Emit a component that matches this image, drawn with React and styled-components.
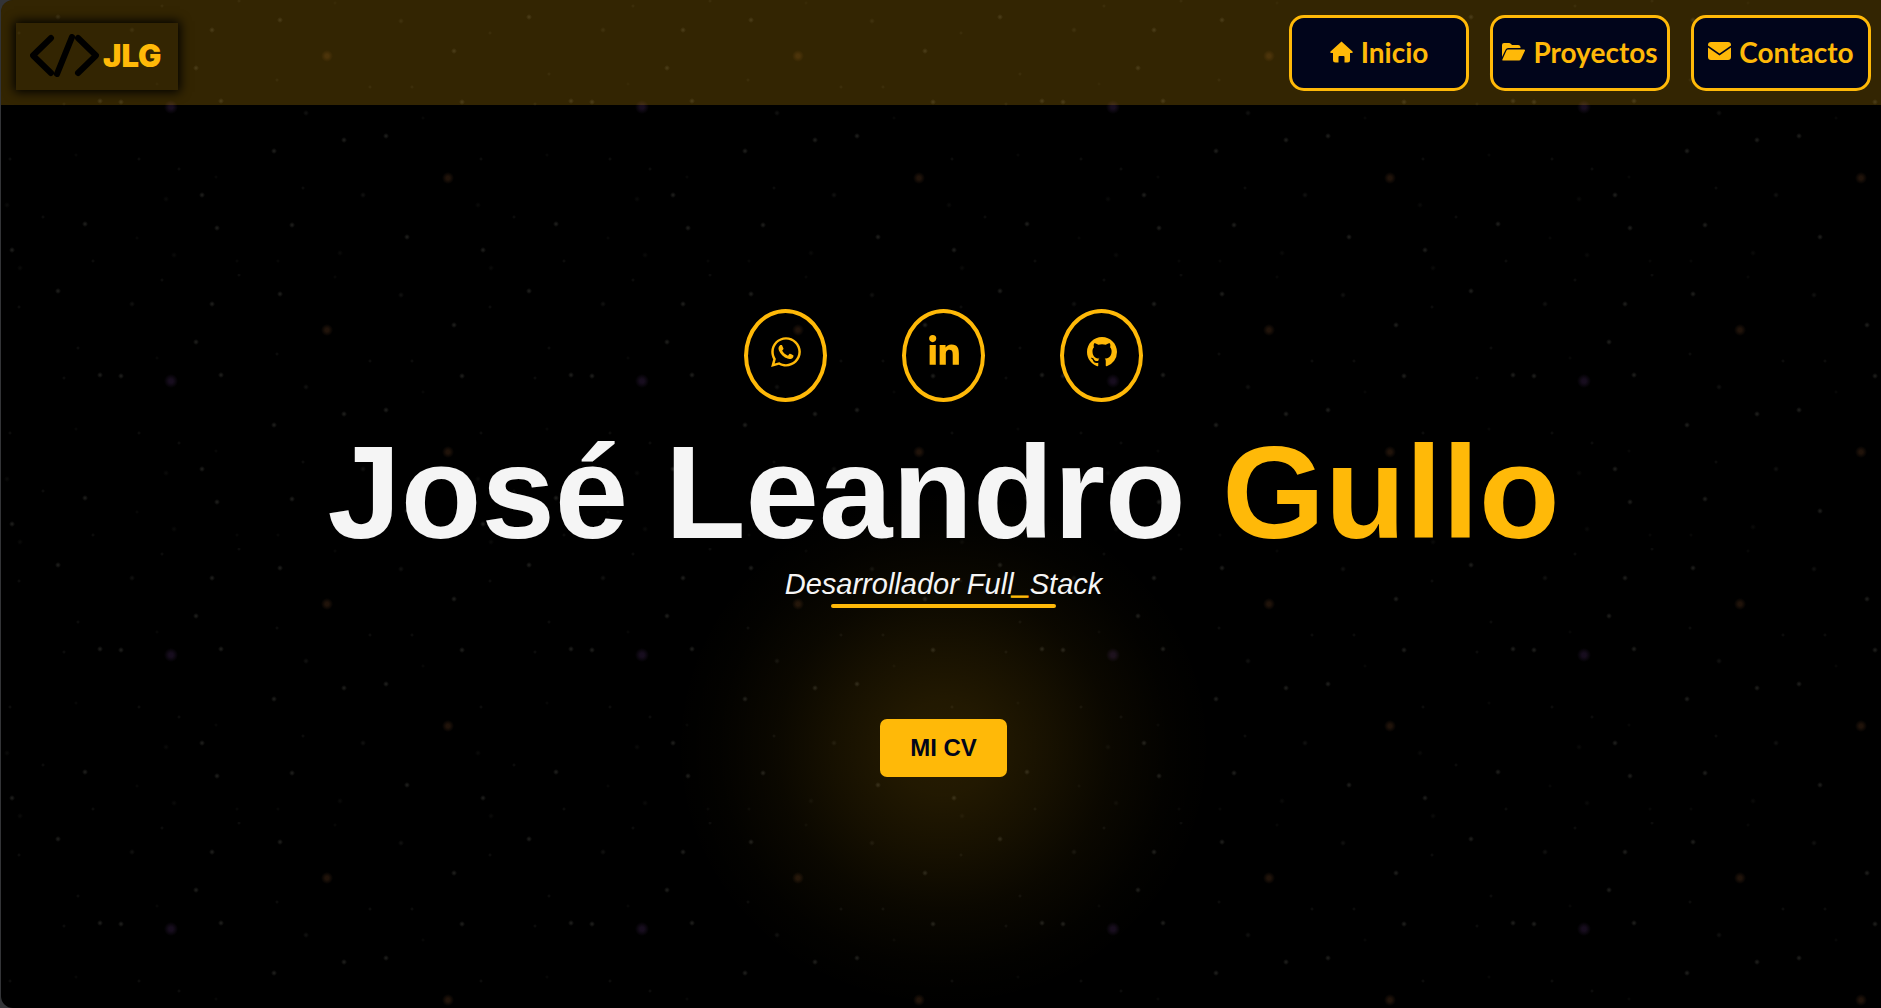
import React from "react";
import styled, { createGlobalStyle } from "styled-components";
import { FaWhatsapp, FaLinkedinIn } from "react-icons/fa6";
import { BsGithub } from "react-icons/bs";

const gold = "#ffb908";
const ink = "#01051b";

// One tile of the star field: [x, y, radius, colour]
const dim = "#090908";
const mid = "#0f0f0e";
const lit = "#1b1b19";
const amber = "#20130a";
const violet = "#170d1e";

const stars = [
  [170, 107, 6, violet], [447, 178, 5, amber], [326, 330, 5, amber],
  [305, 113, 2, mid], [422, 118, 1, dim],
  [343, 140, 2, lit], [385, 136, 2, lit], [273, 151, 2, lit],
  [9, 159, 1, mid], [75, 155, 1, dim], [138, 159, 1, mid],
  [178, 169, 1, mid], [215, 177, 1, dim], [302, 188, 1, mid],
  [201, 195, 2, lit], [165, 199, 2, dim], [362, 195, 2, mid],
  [6, 205, 2, dim], [42, 217, 1, mid], [84, 224, 2, lit],
  [216, 228, 2, lit], [291, 225, 2, lit], [136, 238, 1, dim],
  [406, 237, 2, lit], [11, 250, 2, lit], [339, 253, 2, dim],
  [173, 255, 2, dim], [19, 268, 2, dim], [92, 261, 1, mid],
  [236, 261, 1, dim], [277, 261, 1, dim], [238, 275, 1, mid],
  [161, 280, 1, mid], [334, 277, 1, dim], [57, 291, 2, lit],
  [279, 294, 2, lit], [211, 304, 2, lit], [131, 304, 2, mid],
  [400, 295, 2, mid], [18, 307, 1, mid], [453, 325, 2, lit],
  [195, 342, 2, lit], [77, 348, 1, mid], [276, 354, 1, mid],
  [156, 358, 1, dim], [369, 361, 1, mid], [411, 361, 1, mid],
  [99, 375, 2, lit], [120, 376, 2, lit], [220, 375, 2, lit],
  [461, 376, 2, lit], [63, 378, 1, mid],
];

const TILE_W = 471;
const TILE_H = 274;

const starLayers = stars
  .map(
    ([x, y, r, c]) =>
      `radial-gradient(circle at ${x}px ${y % TILE_H}px, ${c} 0, ${c} ${r / 3}px, transparent ${r + 1}px)`
  )
  .join(",");

const GlobalStyle = createGlobalStyle`
  *, *::before, *::after { box-sizing: border-box; }
  html { background: #333437; }
  body { margin: 0; }
  a { color: inherit; text-decoration: none; }
`;

const Page = styled.div`
  display: flex;
  flex-direction: column;
  min-height: 100vh;
  margin-left: 1px;
  overflow: hidden;
  isolation: isolate;
  border-radius: 12px 0 0 12px;
  color: #f5f5f5;
  font-family: "Liberation Sans", Arial, sans-serif;
  background-color: #000;
  background-image: ${starLayers};
  background-size: ${TILE_W}px ${TILE_H}px;
`;

const Header = styled.header`
  display: flex;
  align-items: center;
  justify-content: space-between;
  padding: 15px 10px 14px 15px;
  background: rgba(255, 185, 8, 0.2);
`;

const Logo = styled.a`
  display: flex;
  align-items: center;
  gap: 4px;
  height: 67px;
  margin-top: 7px;
  padding: 0 16px 2px 14px;
  box-shadow: 0 0 10px 2px #000;
  color: ${gold};
  font: 900 31px/32px Inter, "Liberation Sans", sans-serif;
`;

const LogoMark = styled.svg`
  width: 69px;
  height: 43px;
  fill: none;
  stroke: #000;
  stroke-width: 6;
  stroke-linecap: round;
  stroke-linejoin: round;
`;

const Nav = styled.nav`
  display: flex;
  gap: 21px;
`;

const NavLink = styled.a`
  display: flex;
  align-items: center;
  justify-content: center;
  gap: 8px;
  width: 180px;
  height: 76px;
  padding-bottom: 2px;
  border: 3px solid ${gold};
  border-radius: 15px;
  background: ${ink};
  color: ${gold};
  font: 700 28px/32px "Trebuchet MS", Lato, sans-serif;
`;

const NavGlyph = styled.svg`
  width: 23px;
  height: 24px;
  flex: none;
  fill: currentColor;
`;

const Hero = styled.main`
  flex: 1;
  display: flex;
  flex-direction: column;
  align-items: center;
  padding: 204px 0 40px 5px;
`;

const Socials = styled.div`
  display: flex;
  gap: 75px;
`;

const SocialLink = styled.a`
  display: grid;
  place-items: center;
  width: 83px;
  height: 93px;
  padding-bottom: 8px;
  border: 4px solid ${gold};
  border-radius: 50%;
  color: ${gold};
  font-size: ${({ $size }) => $size}px;

  svg { display: block; }
`;

const Name = styled.h1`
  margin: 18px 0 2px;
  font-size: 132px;
  line-height: 146px;
  white-space: nowrap;
`;

const Accent = styled.span`
  color: ${gold};
`;

const Role = styled.p`
  display: flex;
  flex-direction: column;
  align-items: center;
  margin: 0;
  font-size: 29px;
  line-height: 32px;
  font-style: italic;

  ${Accent} {
    -webkit-text-stroke: 1px ${gold};
  }

  &::after {
    content: "";
    width: 225px;
    height: 4px;
    margin-top: 4px;
    border-radius: 2px;
    background: ${gold};
  }
`;

const CvButton = styled.button`
  position: relative;
  margin-top: 111px;
  padding: 15px 30px;
  border: 0;
  border-radius: 7px;
  background: ${gold};
  color: ${ink};
  font: 700 24px/28px "Liberation Sans", Arial, sans-serif;
  cursor: pointer;

  &::before {
    content: "";
    position: absolute;
    z-index: -1;
    inset: -231px -206px;
    pointer-events: none;
    background: radial-gradient(
      closest-side,
      rgba(255, 185, 8, 0.15) 0%,
      rgba(255, 185, 8, 0.135) 18%,
      rgba(255, 185, 8, 0.09) 40%,
      rgba(255, 185, 8, 0.045) 62%,
      rgba(255, 185, 8, 0.012) 84%,
      transparent 100%
    );
  }
`;

const navItems = [
  {
    label: "Inicio",
    href: "#inicio",
    shape: (
      <path d="M11.500 1.500 22.500 11.500Q23.500 13 21.500 13H20V20Q20 22.500 17.500 22.500H14.500V17Q14.500 16 13.500 16H9.500Q8.500 16 8.500 17V22.500H5.500Q3 22.500 3 20V13H1.500Q-.5 13 .5 11.500Z" />
    ),
  },
  {
    label: "Proyectos",
    href: "#proyectos",
    shape: (
      <>
        <path d="M0 17V5Q0 3 2 3H7Q8 3 9 4L10 5H16Q18.500 5 18.500 7.500V8H6Q4.500 8 3.700 9.500Z" />
        <path d="M6 9.500H22Q23.500 9.500 22.800 11L19 19Q18.300 20.500 17 20.500H1Q0 20.500 .5 19.300L4.500 10.600Q5 9.500 6 9.500Z" />
      </>
    ),
  },
  {
    label: "Contacto",
    href: "#contacto",
    shape: (
      <>
        <path d="M0 5Q0 2 3 2H20Q23 2 23 5V5.500L11.500 13.500 0 5.500Z" />
        <path d="M0 7.500 11.500 15.500 23 7.500V17Q23 20 20 20H3Q0 20 0 17Z" />
      </>
    ),
  },
];

const socialItems = [
  { label: "WhatsApp", href: "#whatsapp", Icon: FaWhatsapp, size: 34 },
  { label: "LinkedIn", href: "#linkedin", Icon: FaLinkedinIn, size: 34 },
  { label: "GitHub", href: "#github", Icon: BsGithub, size: 30 },
];

export default function App() {
  return (
    <>
      <GlobalStyle />
      <Page>
        <Header>
          <Logo href="#inicio">
            <LogoMark viewBox="0 0 69 43" aria-hidden="true">
              <path d="M21 4 3 21.500 21 39M42 3 27 40M48 4 66 21.500 48 39" />
            </LogoMark>
            <span>JLG</span>
          </Logo>
          <Nav>
            {navItems.map(({ label, href, shape }) => (
              <NavLink key={label} href={href}>
                <NavGlyph viewBox="0 0 23 24" aria-hidden="true">
                  {shape}
                </NavGlyph>
                <span>{label}</span>
              </NavLink>
            ))}
          </Nav>
        </Header>
        <Hero id="inicio">
          <Socials>
            {socialItems.map(({ label, href, Icon, size }) => (
              <SocialLink key={label} href={href} aria-label={label} $size={size}>
                <Icon aria-hidden="true" />
              </SocialLink>
            ))}
          </Socials>
          <Name>
            José Leandro <Accent>Gullo</Accent>
          </Name>
          <Role>
            <span>
              Desarrollador Full<Accent>_</Accent>Stack
            </span>
          </Role>
          <CvButton type="button">MI CV</CvButton>
        </Hero>
      </Page>
    </>
  );
}
